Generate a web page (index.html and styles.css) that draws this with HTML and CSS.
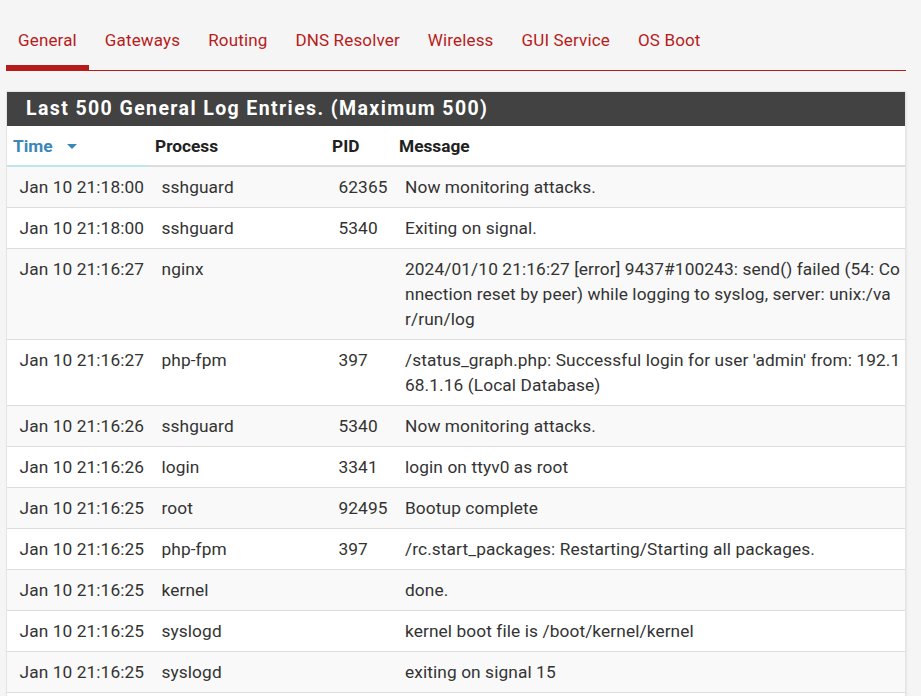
FILE: index.html
```html
<!DOCTYPE html>
<html>
<head>
<meta charset="utf-8">
<link rel="stylesheet" href="styles.css">
</head>
<body>
<div class="page">
  <ul class="tabs">
    <li class="tab active"><a>General</a></li>
    <li class="tab"><a>Gateways</a></li>
    <li class="tab"><a>Routing</a></li>
    <li class="tab"><a>DNS Resolver</a></li>
    <li class="tab"><a>Wireless</a></li>
    <li class="tab"><a>GUI Service</a></li>
    <li class="tab"><a>OS Boot</a></li>
  </ul>
  <div class="panel">
    <div class="panel-heading">Last 500 General Log Entries. (Maximum 500)</div>
    <table class="log">
      <colgroup>
        <col class="c-time"><col class="c-proc"><col class="c-pid"><col class="c-msg">
      </colgroup>
      <thead>
        <tr>
          <th class="sorted">Time <span class="caret"></span></th>
          <th>Process</th>
          <th>PID</th>
          <th>Message</th>
        </tr>
      </thead>
      <tbody>
        <tr><td>Jan 10 21:18:00</td><td>sshguard</td><td>62365</td><td class="msg">Now monitoring attacks.</td></tr>
        <tr><td>Jan 10 21:18:00</td><td>sshguard</td><td>5340</td><td class="msg">Exiting on signal.</td></tr>
        <tr><td>Jan 10 21:16:27</td><td>nginx</td><td></td><td class="msg">2024/01/10 21:16:27 [error] 9437#100243: send() failed (54: Connection reset by peer) while logging to syslog, server: unix:/var/run/log</td></tr>
        <tr><td>Jan 10 21:16:27</td><td>php-fpm</td><td>397</td><td class="msg">/status_graph.php: Successful login for user 'admin' from: 192.168.1.16 (Local Database)</td></tr>
        <tr><td>Jan 10 21:16:26</td><td>sshguard</td><td>5340</td><td class="msg">Now monitoring attacks.</td></tr>
        <tr><td>Jan 10 21:16:26</td><td>login</td><td>3341</td><td class="msg">login on ttyv0 as root</td></tr>
        <tr><td>Jan 10 21:16:25</td><td>root</td><td>92495</td><td class="msg">Bootup complete</td></tr>
        <tr><td>Jan 10 21:16:25</td><td>php-fpm</td><td>397</td><td class="msg">/rc.start_packages: Restarting/Starting all packages.</td></tr>
        <tr><td>Jan 10 21:16:25</td><td>kernel</td><td></td><td class="msg">done.</td></tr>
        <tr><td>Jan 10 21:16:25</td><td>syslogd</td><td></td><td class="msg">kernel boot file is /boot/kernel/kernel</td></tr>
        <tr><td>Jan 10 21:16:25</td><td>syslogd</td><td></td><td class="msg">exiting on signal 15</td></tr>
        <tr class="spacer"><td></td><td></td><td></td><td></td></tr>
      </tbody>
    </table>
  </div>
</div>
</body>
</html>
```
FILE: styles.css
```css
html, body {
  margin: 0;
  padding: 0;
  background: #f5f5f5;
  font-family: Roboto, "Liberation Sans", sans-serif;
  color: #333;
}
.page {
  padding: 0 15px 0 6px;
  width: 900px;
}
.tabs {
  list-style: none;
  margin: 0;
  padding: 28px 0 0 0;
  display: flex;
  gap: 4px;
  border-bottom: 1px solid #b71c1c;
}
.tab a {
  display: block;
  padding: 0 12px 13px 12px;
  line-height: 24px;
  font-size: 17px;
  letter-spacing: 0.15px;
  color: #b71c1c;
  border-bottom: 5px solid transparent;
}
.tab.active a {
  border-bottom-color: #b71c1c;
  border-top-right-radius: 3px;
}
.panel {
  margin-top: 20px;
  border: 1px solid #e4e4e4;
  box-shadow: 1px 1px 2px rgba(0,0,0,0.06);
  background: #fff;
}
.panel-heading {
  background: #424242;
  color: #fff;
  height: 34px;
  line-height: 34px;
  padding-left: 19px;
  font-size: 19.5px;
  font-weight: bold;
  letter-spacing: 1.4px;
}
.log {
  width: 100%;
  border-collapse: collapse;
  table-layout: fixed;
  font-size: 17.3px;
  letter-spacing: 0.1px;
}
.c-time { width: 142px; }
.c-proc { width: 177px; }
.c-pid { width: 67px; }
.log th {
  text-align: left;
  font-weight: bold;
  line-height: 24px;
  padding: 7.5px 6px;
  border-bottom: 2px solid #ddd;
  color: #212121;
  letter-spacing: 0;
}
.log th.sorted {
  color: #3a87b8;
  border-bottom-color: #bfe5ef;
}
.caret {
  display: inline-block;
  width: 0;
  height: 0;
  margin-left: 10px;
  vertical-align: middle;
  border-left: 5px solid transparent;
  border-right: 5px solid transparent;
  border-top: 5px solid #3a87b8;
}
.log td {
  line-height: 25px;
  padding: 7.5px 0 7.5px 12.5px;
  vertical-align: top;
  border-bottom: 1px solid #ddd;
  color: #333;
  white-space: nowrap;
}
.log tbody tr:nth-child(odd) td {
  background: #f9f9f9;
}
.log tr.spacer td {
  height: 25px;
}
.log td.msg {
  white-space: normal;
  word-break: break-all;
  padding-left: 12px;
  padding-right: 2px;
}
```
